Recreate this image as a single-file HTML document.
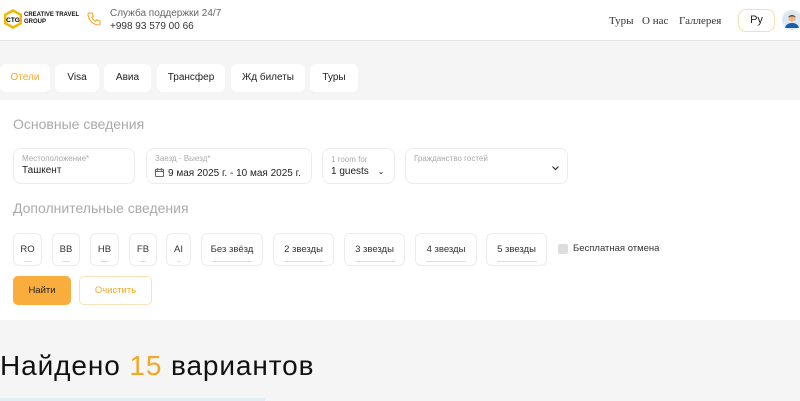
<!DOCTYPE html>
<html><head><meta charset="utf-8"><style>
*{margin:0;padding:0;box-sizing:border-box}
body{width:800px;height:401px;overflow:hidden;background:#f5f5f5;font-family:"Liberation Sans",sans-serif;position:relative;color:#222}
.a{position:absolute}
.hdr{left:0;top:0;width:800px;height:41px;background:#fff;border-bottom:1px solid #e4e4e4}
.tab{top:64px;height:28px;background:#fff;border-radius:6px;font-size:10px;line-height:28px;text-align:center;color:#222}
.panel{left:0;top:100px;width:800px;height:220px;background:#fff}
.h{font-size:14px;color:#aaa}
.f{top:148px;height:36px;border:1px solid #ececec;border-radius:8px;background:#fff}
.lb{position:absolute;left:8px;top:5px;font-size:8px;color:#aaa}
.vl{position:absolute;left:8px;top:17px;font-size:10px;color:#222}
.c{top:233px;height:33px;border:1px solid #ececec;border-radius:6px;font-size:9.5px;text-align:center;line-height:31px;color:#333}
.c i{position:absolute;bottom:3px;left:50%;transform:translateX(-50%);height:1px;background:#ddd}
</style></head><body>
<div class="a hdr"></div>
<svg class="a" style="left:2px;top:8px" width="22" height="22" viewBox="0 0 22 22"><polygon points="11,1 20,6 20,16 11,21 2,16 2,6" fill="#f5b800"/><polygon points="11,4 17.5,7.5 17.5,14.5 11,18 4.5,14.5 4.5,7.5" fill="#fff"/><text x="11" y="14" font-size="6.5" font-weight="bold" text-anchor="middle" font-family="Liberation Sans">CTG</text></svg>
<div class="a" style="left:24px;top:12px;font-size:6px;font-weight:bold;line-height:7px;color:#111">CREATIVE TRAVEL<br>GROUP</div>
<svg class="a" style="left:86px;top:11px" width="16" height="16" viewBox="0 0 24 24"><path d="M5 3h4l2 5-2.5 1.5a11 11 0 0 0 6 6L16 13l5 2v4a2 2 0 0 1-2 2A17 17 0 0 1 3 5a2 2 0 0 1 2-2z" fill="none" stroke="#f5a623" stroke-width="1.6"/></svg>
<div class="a" style="left:110px;top:8px;font-size:10px;color:#666">Служба поддержки 24/7</div>
<div class="a" style="left:110px;top:21px;font-size:10px;color:#333">+998 93 579 00 66</div>
<div class="a" style="left:609px;top:15px;font-size:11px;font-family:'Liberation Serif',serif;color:#333">Туры</div>
<div class="a" style="left:642px;top:15px;font-size:11px;font-family:'Liberation Serif',serif;color:#333">О нас</div>
<div class="a" style="left:679px;top:15px;font-size:11px;font-family:'Liberation Serif',serif;color:#333">Галлерея</div>
<div class="a" style="left:738px;top:9px;width:37px;height:23px;border:1px solid #f7dcb5;border-radius:8px;font-size:11px;text-align:center;line-height:21px;color:#222">Ру</div>
<svg class="a" style="left:782px;top:10px" width="20" height="20" viewBox="0 0 20 20"><circle cx="10" cy="10" r="10" fill="#dde8f2"/><path d="M3 18c1-4 4-5 7-5s6 1 7 5z" fill="#1f5fa8"/><circle cx="10" cy="8" r="3.6" fill="#e9b48a"/><path d="M6.4 7.5c0-3 7.2-3 7.2 0-1-1.5-6-1.5-7.2 0z" fill="#4a2e1a"/></svg>

<div class="a tab" style="left:0;width:50px;color:#f5a623">Отели</div>
<div class="a tab" style="left:55px;width:44px">Visa</div>
<div class="a tab" style="left:104px;width:47px">Авиа</div>
<div class="a tab" style="left:157px;width:68px">Трансфер</div>
<div class="a tab" style="left:231px;width:74px">Жд билеты</div>
<div class="a tab" style="left:310px;width:48px">Туры</div>

<div class="a panel"></div>
<div class="a h" style="left:13px;top:116px">Основные сведения</div>
<div class="a f" style="left:13px;width:122px"><div class="lb">Местоположение*</div><div class="vl" style="top:16px">Ташкент</div></div>
<div class="a f" style="left:146px;width:166px"><div class="lb">Заезд - Выезд*</div><div class="vl" style="top:19px"><svg width="9" height="9" viewBox="0 0 10 10" style="vertical-align:-1px;margin-right:4px"><rect x="0.5" y="1.5" width="9" height="8" rx="1" fill="none" stroke="#555"/><path d="M0.5 4h9M3 0v3M7 0v3" stroke="#555"/></svg>9 мая 2025 г. - 10 мая 2025 г.</div></div>
<div class="a f" style="left:322px;width:73px"><div class="lb" style="top:6px">1 room for</div><div class="vl" style="top:17px">1 guests <span style="margin-left:6px;font-size:8px">&#8964;</span></div></div>
<div class="a f" style="left:405px;width:163px"><div class="lb">Гражданство гостей</div><svg class="a" style="left:146px;top:17px" width="7" height="5" viewBox="0 0 7 5"><path d="M0.5 0.5L3.5 3.5 6.5 0.5" fill="none" stroke="#333" stroke-width="1.2"/></svg></div>

<div class="a h" style="left:13px;top:200px">Дополнительные сведения</div>
<div class="a c" style="left:13px;width:29px">RO<i style="width:8px"></i></div>
<div class="a c" style="left:52px;width:28px">BB<i style="width:8px"></i></div>
<div class="a c" style="left:90px;width:29px">HB<i style="width:8px"></i></div>
<div class="a c" style="left:129px;width:28px">FB<i style="width:6px"></i></div>
<div class="a c" style="left:166px;width:25px">AI<i style="width:3px"></i></div>
<div class="a c" style="left:201px;width:62px">Без звёзд<i style="width:40px"></i></div>
<div class="a c" style="left:273px;width:61px">2 звезды<i style="width:40px"></i></div>
<div class="a c" style="left:344px;width:61px">3 звезды<i style="width:40px"></i></div>
<div class="a c" style="left:415px;width:62px">4 звезды<i style="width:40px"></i></div>
<div class="a c" style="left:486px;width:61px">5 звезды<i style="width:40px"></i></div>
<div class="a" style="left:558px;top:244px;width:10px;height:10px;background:#ddd;border-radius:2px"></div>
<div class="a" style="left:573px;top:243px;font-size:9.5px;color:#333">Бесплатная отмена</div>
<div class="a" style="left:13px;top:276px;width:58px;height:29px;background:#f8ad3c;border-radius:5px;font-size:9.5px;text-align:center;line-height:29px;color:#222">Найти</div>
<div class="a" style="left:79px;top:276px;width:73px;height:29px;border:1px solid #fbe0bd;border-radius:5px;font-size:9.5px;text-align:center;line-height:27px;color:#f5a623">Очистить</div>

<div class="a" style="left:0;top:350px;font-size:28px;color:#111;letter-spacing:0.9px">Найдено <span style="color:#f5a623">15</span> вариантов</div>
<div class="a" style="left:0;top:398px;width:265px;height:3px;background:#e2eef6"></div>
</body></html>
